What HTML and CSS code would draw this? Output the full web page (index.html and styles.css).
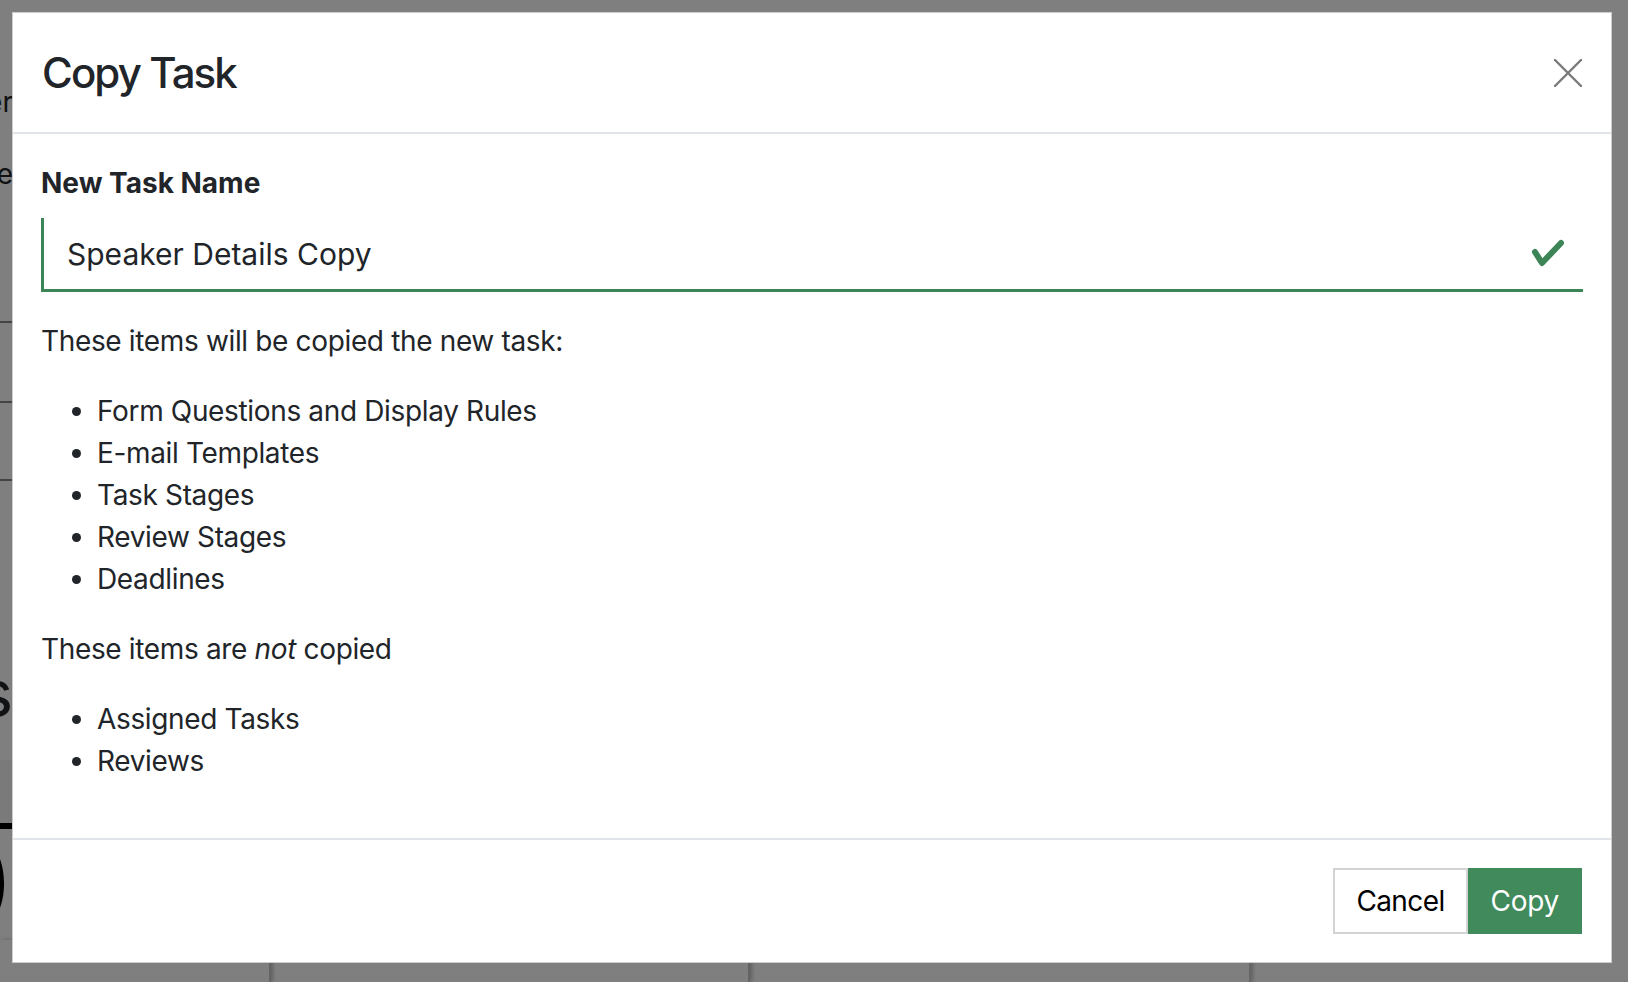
FILE: index.html
```html
<!DOCTYPE html>
<html lang="en">
<head>
    <meta charset="UTF-8">
    <meta name="viewport" content="width=device-width, initial-scale=1.0">
    <title>Copy Task</title>
    <link rel="stylesheet" href="styles.css">
</head>
<body>
    <!-- page behind the dialog -->
    <div class="page">
        <div class="page-side">
            <div class="side-text t1"><span>Speaker</span></div>
            <div class="side-text t2"><span>Name</span></div>
            <div class="side-line l1"></div>
            <div class="side-line l2"></div>
            <div class="side-line l3"></div>
            <div class="side-big t3"><span>Tasks</span></div>
            <div class="side-band"></div>
            <div class="side-rule"></div>
            <div class="side-huge"><span>D</span></div>
        </div>
        <div class="page-foot">
            <div class="foot-cell c1"></div>
            <div class="foot-cell c2"></div>
            <div class="foot-cell c3"></div>
            <div class="foot-cell c4"></div>
        </div>
    </div>

    <div class="backdrop"></div>

    <div class="modal">
        <div class="modal-header">
            <h4 class="modal-title">Copy Task</h4>
            <button type="button" class="close" aria-label="Close">
                <svg width="28" height="28" viewBox="0 0 28 28">
                    <path d="M1 1 L27 27 M27 1 L1 27" stroke="#7a7a7a" stroke-width="2.4" stroke-linecap="round" fill="none"/>
                </svg>
            </button>
        </div>

        <div class="modal-body">
            <div class="form-group">
                <label for="taskName">New Task Name</label>
                <div class="input-wrap">
                    <input type="text" id="taskName" value="Speaker Details Copy">
                    <svg class="valid-icon" width="34" height="30" viewBox="0 0 34 30">
                        <polyline points="5,14 12,25 31,5" stroke="#3d8456" stroke-width="6" stroke-linecap="round" stroke-linejoin="round" fill="none"/>
                    </svg>
                </div>
            </div>

            <p>These items will be copied the new task:</p>
            <ul>
                <li>Form Questions and Display Rules</li>
                <li>E-mail Templates</li>
                <li>Task Stages</li>
                <li>Review Stages</li>
                <li>Deadlines</li>
            </ul>

            <p>These items are <em>not</em> copied</p>
            <ul>
                <li>Assigned Tasks</li>
                <li>Reviews</li>
            </ul>
        </div>

        <div class="modal-footer">
            <button type="button" class="btn btn-cancel">Cancel</button>
            <button type="button" class="btn btn-copy">Copy</button>
        </div>
    </div>
</body>
</html>
```

FILE: styles.css
```css
*{
    margin: 0;
    padding: 0;
    box-sizing: border-box;
}

body{
    width: 1628px;
    height: 982px;
    overflow: hidden;
    background-color: #fff;
    font-family: Inter, "Noto Sans", "Liberation Sans", sans-serif;
    color: #212529;
}

/* page behind */
.page{
    height: 982px;
    display: flex;
    flex-direction: column;
}

.page-side{
    width: 13px;
    height: 940px;
    overflow: hidden;
    display: flex;
    flex-direction: column;
}

.side-text, .side-big, .side-huge{
    display: flex;
    justify-content: flex-end;
    white-space: nowrap;
    color: #212529;
}

.side-text{
    font-size: 28px;
    line-height: 40px;
}
.t1{ margin-top: 82px; }
.t2{ margin-top: 32px; }

.side-line{
    height: 2px;
    background-color: #888;
}
.l1{ margin-top: 127px; }
.l2{ margin-top: 78px; }
.l3{ margin-top: 76px; }

.side-big{
    font-size: 64px;
    line-height: 70px;
    margin-top: 177px;
}

.side-band{
    height: 63px;
    margin-top: 32px;
    background-color: #f4f4f4;
}

.side-rule{
    height: 6px;
    background-color: #000;
}

.side-huge{
    font-size: 150px;
    line-height: 110px;
    color: #000;
}

.page-foot{
    flex: 1;
    display: flex;
}

.foot-cell{
    border-right: 2px solid #ccc;
    box-shadow: 2px 0 4px rgba(0, 0, 0, 0.25);
}
.c1{ width: 271px; }
.c2{ width: 479px; }
.c3{ width: 501px; }
.c4{ flex: 1; border-right: none; box-shadow: none; }

.backdrop{
    position: fixed;
    inset: 0;
    background-color: rgba(0, 0, 0, 0.5);
}

/* dialog */
.modal{
    position: fixed;
    top: 12px;
    left: 12px;
    width: 1600px;
    background-color: #fff;
    border: 1px solid rgba(0, 0, 0, 0.2);
    display: flex;
    flex-direction: column;
    font-size: 28px;
    line-height: 42px;
}

.modal-header{
    display: flex;
    align-items: center;
    justify-content: space-between;
    padding: 28px 29px 28px 29px;
    border-bottom: 2px solid #e1e4e8;
}

.modal-title{
    font-size: 42px;
    line-height: 63px;
    font-weight: 500;
    letter-spacing: -1.9px;
}

.close{
    border: none;
    background: none;
    width: 28px;
    height: 28px;
    display: flex;
}

.modal-body{
    padding: 28px;
    letter-spacing: -0.35px;
}

.form-group{
    margin-bottom: 28px;
}

label{
    display: block;
    font-weight: 700;
    margin-bottom: 14px;
    letter-spacing: 0;
}

.input-wrap{
    display: flex;
    align-items: center;
    border-left: 3px solid #3d8456;
    border-bottom: 3px solid #3d8456;
    padding: 15px 19px 14px 23px;
}

.input-wrap input{
    flex: 1;
    border: none;
    outline: none;
    font-family: inherit;
    font-size: 30px;
    letter-spacing: 0;
    line-height: 42px;
    height: 42px;
    color: #212529;
    background: none;
}

.valid-icon{
    margin-top: -2px;
}

p{
    margin-bottom: 28px;
}

ul{
    padding-left: 56px;
    margin-bottom: 28px;
}

.modal-footer{
    display: flex;
    justify-content: flex-end;
    padding: 21px 29px 21px 22px;
    border-top: 2px solid #e1e4e8;
}

.btn{
    font-family: Inter, "Liberation Sans", sans-serif;
    font-size: 28px;
    line-height: 42px;
    padding: 10px 21px;
    margin: 7px 0;
    cursor: pointer;
}

.btn-cancel{
    background-color: #fff;
    color: #000;
    border: 2px solid #d3d3d3;
    letter-spacing: -0.6px;
}

.btn-copy{
    background-color: #418a5b;
    color: #fff;
    border: 2px solid #418a5b;
    letter-spacing: -0.3px;
}
```
